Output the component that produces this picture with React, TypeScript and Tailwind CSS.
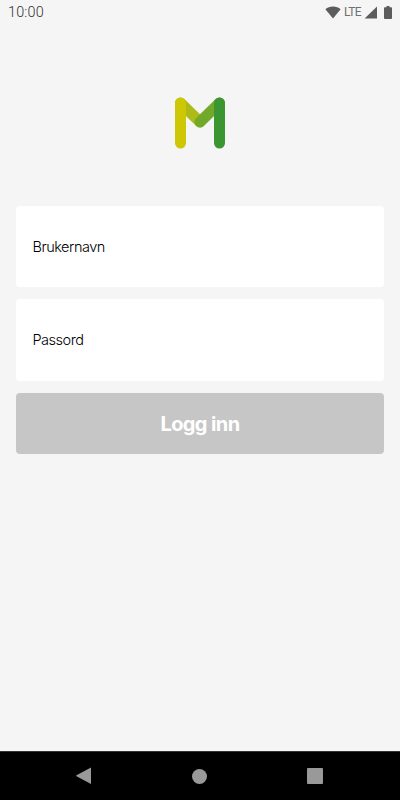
import React from 'react';

function StatusBar() {
  return (
    <header className="flex h-[25px] items-center justify-between pl-[8px] pr-[8px]">
      <span className="pt-[1px] font-[Roboto,sans-serif] text-[14.4px] font-light leading-[24px] tracking-[0.2px] text-[#333333]">10:00</span>
      <div className="flex items-center">
        <svg className="h-[13px] w-[16px]" viewBox="0 0 16 13" fill="#5c5c5c">
          <path d="M8 12.6 .4 3.2C2.4 1.4 5 .4 8 .4s5.600 1 7.600 2.800z" />
        </svg>
        <span className="ml-[3px] w-[19px] whitespace-nowrap font-[Roboto,sans-serif] text-[12px] leading-[25px] tracking-[-0.6px] text-[#707070]">LTE</span>
        <svg className="ml-[1px] h-[13px] w-[14px]" viewBox="0 0 14 13" fill="#5c5c5c">
          <path d="M13 .4v12.200H.6z" />
        </svg>
        <svg className="ml-[6px] h-[13px] w-[8px]" viewBox="0 0 8 13" fill="#5c5c5c">
          <path d="M2.500 0h3v1.300H7.200q.8 0 .8.800V12.200q0 .8-.8.800H.8q-.8 0-.8-.8V2.100q0-.8.800-.8h1.700z" />
        </svg>
      </div>
    </header>
  );
}

function Logo() {
  return (
    <svg className="mx-auto mt-[72px] h-[52px] w-[50px]" viewBox="0 0 50 52" fill="none" strokeLinecap="round" strokeWidth="11">
      <path d="M5.500 6 25 25" stroke="#aeba18" />
      <path d="M44.500 6 25 25" stroke="#73a92b" />
      <path d="M5.500 6v40" stroke="#cec703" />
      <path d="M44.500 6v40" stroke="#3b9631" />
    </svg>
  );
}

function Field({ label, className }: { label: string; className: string }) {
  return (
    <div className={`flex items-center rounded-[4px] bg-white pl-[16.500px] text-[14.5px] font-[350] leading-[20px] tracking-[-0.48px] text-black ${className}`}>
      <span>{label}</span>
    </div>
  );
}

function NavBar() {
  return (
    <nav className="mt-auto flex h-[49px] items-center justify-between border-t border-[#333333] bg-black pl-[76px] pr-[77px]">
      <svg className="h-[18px] w-[16px]" viewBox="0 0 16 18" fill="#999999">
        <path d="M15 .6v16.400L.5 9.300q-.6-.5 0-1L14.500 .8q.5-.4.500-.2" />
      </svg>
      <span className="ml-[0.5px] size-[15px] rounded-full bg-[#999999]" />
      <span className="size-[16px] rounded-[1px] bg-[#999999]" />
    </nav>
  );
}

export default function App() {
  return (
    <div className="flex h-[800px] w-[400px] flex-col overflow-hidden bg-[#f5f5f5] font-[Inter,sans-serif]">
      <StatusBar />
      <Logo />
      <main className="mt-[56.500px] flex flex-col px-[16px]">
        <Field label="Brukernavn" className="h-[81.500px] pt-[1px]" />
        <Field label="Passord" className="mt-[12px] h-[82px]" />
        <button className="mt-[12px] h-[61px] rounded-[4px] bg-[#c6c6c6] text-[20px] font-bold tracking-[-0.6px] text-white">Logg inn</button>
      </main>
      <NavBar />
    </div>
  );
}
